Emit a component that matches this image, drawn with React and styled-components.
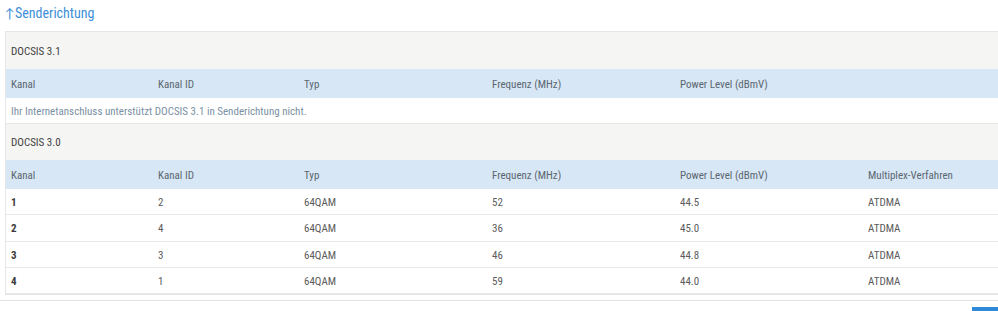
import React from 'react'
import styled, { createGlobalStyle, css } from 'styled-components'

const GlobalStyle = createGlobalStyle`
  body {
    margin: 0;
    background: #fff;
    font-family: "Roboto Condensed", Lato, "Noto Sans", sans-serif;
    overflow: hidden;
  }
`

const Page = styled.div`
  width: 998px;
  height: 311px;
  overflow: hidden;
`

const Section = styled.div`
  padding-left: 5px;
`

const Title = styled.h2`
  margin: 0;
  height: 31px;
  padding-top: 5px;
  box-sizing: border-box;
  font-size: 14px;
  line-height: 17px;
  font-weight: 400;
  color: #3d8fd8;
`

const Arrow = styled.span`
  display: inline-block;
  width: 10px;
  font-size: 13px;
`

const Table = styled.div`
  width: 1000px;
  border: 1px solid #e6e6e6;
  border-right: none;
`

const GroupRow = styled.div`
  height: 36.5px;
  display: flex;
  align-items: center;
  padding: 2px 0 0 5px;
  box-sizing: border-box;
  background: #f5f5f3;
  font-size: 11px;
  color: #3f3f3f;
`

const Row = styled.div`
  display: grid;
  grid-template-columns: 147px 146px 188px 188px 188px 1fr;
  align-items: center;
  height: 26.25px;
  padding: 2px 0 0 5px;
  box-sizing: border-box;
  font-size: 11px;
  color: #5c5c5c;
  border-bottom: 1px solid #e8e8e8;

  ${props => props.head && css`
    height: 29px;
    background: #d7e7f5;
    color: #5b6670;
    border-bottom: none;
  `}
`

const Cell = styled.div`
  white-space: nowrap;
  ${props => props.bold && css`
    font-weight: 700;
    color: #3a3a3a;
  `}
`

const Notice = styled.div`
  height: 26px;
  display: flex;
  align-items: center;
  padding: 2px 0 0 5px;
  box-sizing: border-box;
  font-size: 11px;
  color: #7b90a4;
  border-bottom: 1px solid #e8e8e8;
`

const Footer = styled.div`
  margin-top: 5px;
  border-top: 1px solid #e3e3e3;
  display: flex;
  justify-content: flex-end;
  padding-top: 6px;
`

const Button = styled.div`
  width: 26px;
  height: 10px;
  background: #2e8ad8;
`

const columns = ['Kanal', 'Kanal ID', 'Typ', 'Frequenz (MHz)', 'Power Level (dBmV)']

const rows = [
  ['1', '2', '64QAM', '52', '44.5', 'ATDMA'],
  ['2', '4', '64QAM', '36', '45.0', 'ATDMA'],
  ['3', '3', '64QAM', '46', '44.8', 'ATDMA'],
  ['4', '1', '64QAM', '59', '44.0', 'ATDMA']
]

const App = () => (
  <Page>
    <GlobalStyle />
    <Section>
      <Title><Arrow>↑</Arrow>Senderichtung</Title>
      <Table>
        <GroupRow>DOCSIS 3.1</GroupRow>
        <Row head>
          {columns.map(c => <Cell key={c}>{c}</Cell>)}
        </Row>
        <Notice>Ihr Internetanschluss unterstützt DOCSIS 3.1 in Senderichtung nicht.</Notice>
        <GroupRow>DOCSIS 3.0</GroupRow>
        <Row head>
          {columns.concat('Multiplex-Verfahren').map(c => <Cell key={c}>{c}</Cell>)}
        </Row>
        {rows.map(r => (
          <Row key={r[0]}>
            {r.map((v, i) => <Cell key={i} bold={i === 0}>{v}</Cell>)}
          </Row>
        ))}
      </Table>
    </Section>
    <Footer>
      <Button />
    </Footer>
  </Page>
)

export default App
